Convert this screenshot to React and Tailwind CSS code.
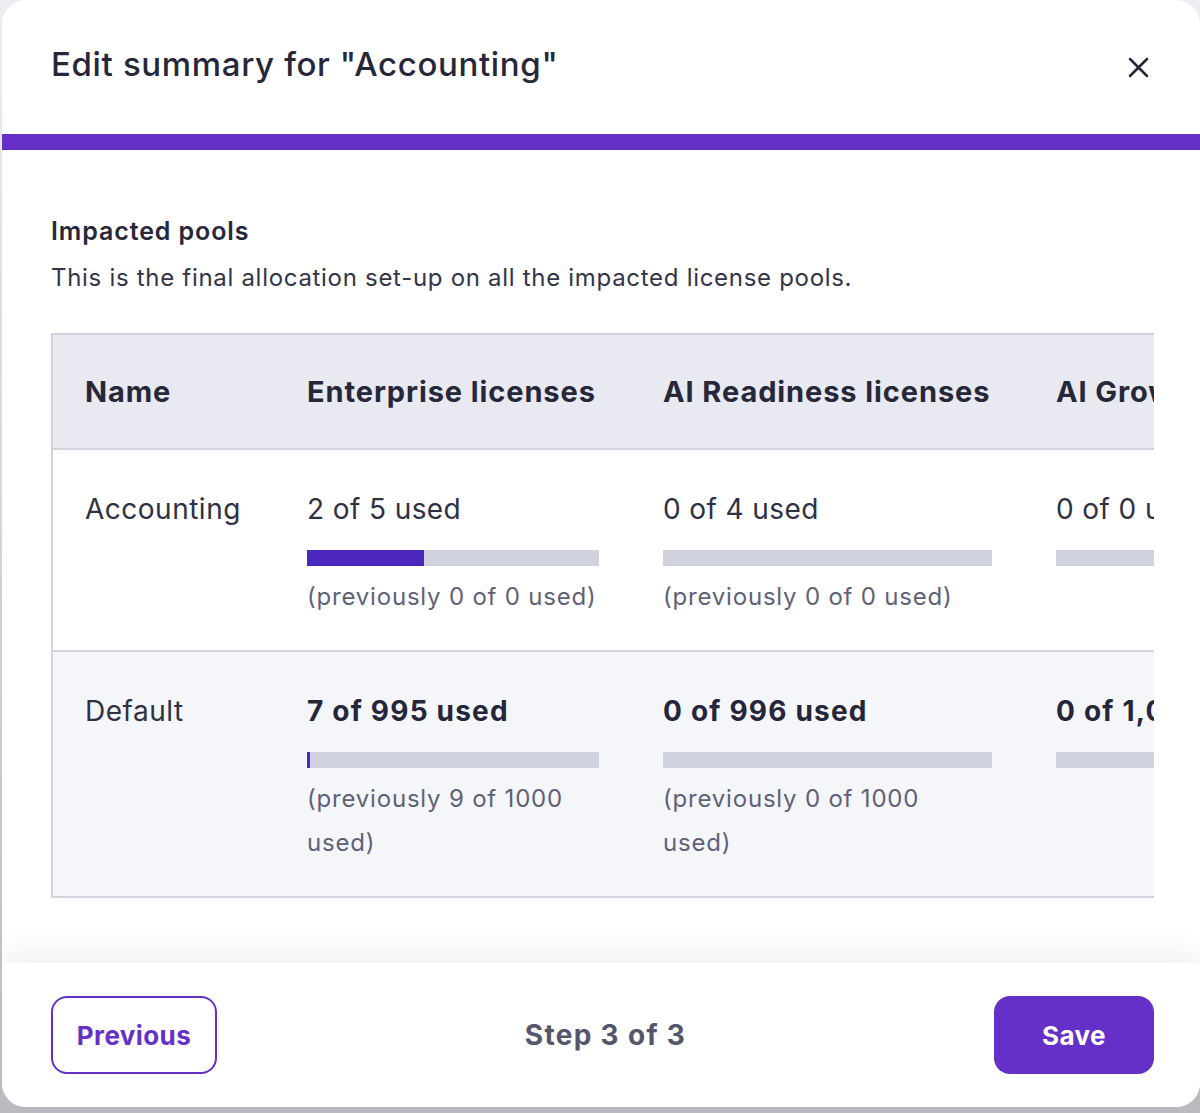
import React from 'react';

const FONT = { fontFamily: 'Inter, "Noto Sans", "Liberation Sans", sans-serif' };

// column content widths, taken from the header labels
const COLUMNS = [
  { label: 'Enterprise licenses', width: 'w-[292px]' },
  { label: 'AI Readiness licenses', width: 'w-[329px]' },
  { label: 'AI Growth licenses', width: 'w-[300px]' },
];

const POOLS = [
  {
    name: 'Accounting',
    changed: false,
    cells: [
      { used: 2, total: 5, label: '2 of 5 used', prev: '(previously 0 of 0 used)' },
      { used: 0, total: 4, label: '0 of 4 used', prev: '(previously 0 of 0 used)' },
      { used: 0, total: 0, label: '0 of 0 used' },
    ],
  },
  {
    name: 'Default',
    changed: true,
    cells: [
      { used: 7, total: 995, label: '7 of 995 used', prev: '(previously 9 of 1000 used)' },
      { used: 0, total: 996, label: '0 of 996 used', prev: '(previously 0 of 1000 used)' },
      { used: 0, total: 1000, label: '0 of 1,000 used' },
    ],
  },
];

function UsageBar({ used, total }) {
  const pct = total > 0 ? Math.max((used / total) * 100, used > 0 ? 1 : 0) : 0;
  return (
    <div className="mt-[19px] h-4 w-full bg-[#d0d2df]">
      <div className="h-4 bg-[#4b28bb]" style={{ width: `${pct}%` }} />
    </div>
  );
}

function CloseIcon() {
  return (
    <svg width="21" height="21" viewBox="0 0 21 21" fill="none" stroke="#26263a" strokeWidth="2.5" strokeLinecap="round">
      <path d="M2 2l17 17M19 2L2 19" />
    </svg>
  );
}

export default function App() {
  return (
    <div className="min-h-[1113px] w-full bg-gradient-to-b from-[#ededf1] to-[#b9b9c0] pl-[2px]" style={FONT}>
      <div className="flex h-[1107px] w-[1198px] flex-col overflow-hidden rounded-[24px] bg-white text-[#27273a]">
        {/* header */}
        <div className="flex h-[134px] items-center justify-between pl-[49px] pr-[51px] pb-[6px]">
          <h2 className="text-[33px] font-medium leading-[40px] tracking-[0.65px]">Edit summary for "Accounting"</h2>
          <button className="mt-[6px] flex h-[21px] w-[21px] items-center justify-center">
            <CloseIcon />
          </button>
        </div>
        <div className="h-4 w-full bg-[#652fc8]" />

        {/* body */}
        <div className="flex-1 pl-[49px] pr-[46px] pt-[65px]">
          <h3 className="text-[25px] font-semibold leading-[32px] tracking-[0.9px]">Impacted pools</h3>
          <p className="mt-[15px] text-[24px] leading-[32px] tracking-[0.7px] text-[#33344a]">
            This is the final allocation set-up on all the impacted license pools.
          </p>

          <div className="mt-[39px] overflow-x-auto [scrollbar-width:none]">
            <table className="border-collapse border-2 border-[#d1d3df]">
              <thead>
                <tr className="h-[115px] bg-[#e9e9f2]">
                  <th className="px-8 text-left">
                    <div className="w-[158px] whitespace-nowrap text-[29px] font-bold tracking-[0.9px]">Name</div>
                  </th>
                  {COLUMNS.map((c) => (
                    <th key={c.label} className="px-8 text-left">
                      <div className={`${c.width} whitespace-nowrap text-[29px] font-bold tracking-[0.9px]`}>{c.label}</div>
                    </th>
                  ))}
                </tr>
              </thead>
              <tbody>
                {POOLS.map((row) => (
                  <tr
                    key={row.name}
                    className={`border-t-2 border-[#d1d3df] align-top ${row.changed ? 'bg-[#f5f6f9]' : 'bg-white'}`}
                  >
                    <td className="whitespace-nowrap px-8 pt-[37px] text-[28px] leading-[44px] tracking-[0.5px] text-[#2f3044]">
                      {row.name}
                    </td>
                    {row.cells.map((cell, i) => (
                      <td key={i} className="px-8 pt-[37px] pb-[31px]">
                        <div className={COLUMNS[i].width}>
                          <div
                            className={`whitespace-nowrap text-[28px] leading-[44px] ${
                              row.changed ? 'font-bold tracking-[1.2px] text-[#26263a]' : 'tracking-[0.4px] text-[#2f3044]'
                            }`}
                          >
                            {cell.label}
                          </div>
                          <UsageBar used={cell.used} total={cell.total} />
                          {cell.prev && (
                            <div className="mt-[9px] text-[24px] leading-[44px] tracking-[0.8px] text-[#5f6178]">{cell.prev}</div>
                          )}
                        </div>
                      </td>
                    ))}
                  </tr>
                ))}
              </tbody>
            </table>
          </div>
        </div>

        {/* footer */}
        <div className="flex h-[144px] items-center justify-between bg-white pl-[49px] pr-[46px] shadow-[0_-14px_24px_rgba(0,0,0,0.05)]">
          <button className="flex h-[78px] w-[166px] items-center justify-center rounded-[16px] border-2 border-[#6530c8] text-[26px] font-bold tracking-[0.4px] text-[#6530c8]">
            Previous
          </button>
          <span className="text-[28px] font-bold tracking-[1.3px] text-[#55566b]">Step 3 of 3</span>
          <button className="flex h-[78px] w-[160px] items-center justify-center rounded-[16px] bg-[#6530c8] text-[26px] font-bold tracking-[0.4px] text-white">
            Save
          </button>
        </div>
      </div>
    </div>
  );
}
